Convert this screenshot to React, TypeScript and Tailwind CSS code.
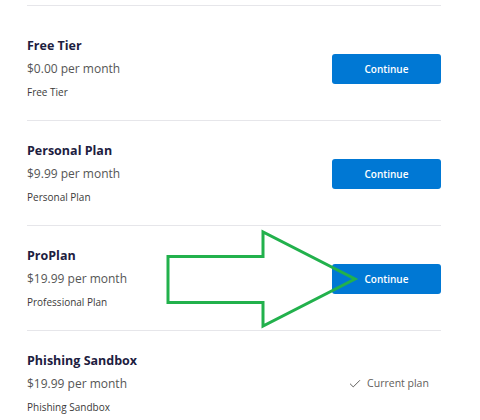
import { Check } from "lucide-react";

type Plan = {
  name: string;
  price: string;
  desc: string;
  current?: boolean;
};

const plans: Plan[] = [
  { name: "Free Tier", price: "$0.00 per month", desc: "Free Tier" },
  { name: "Personal Plan", price: "$9.99 per month", desc: "Personal Plan" },
  { name: "ProPlan", price: "$19.99 per month", desc: "Professional Plan" },
  { name: "Phishing Sandbox", price: "$19.99 per month", desc: "Phishing Sandbox", current: true },
];

function PlanRow({ plan, first }: { plan: Plan; first: boolean }) {
  return (
    <div
      className={`flex items-center justify-between border-t border-[#e6e6ea] pb-[17px] ${
        first ? "pt-[29px]" : "pt-[19px]"
      }`}
    >
      <div className="flex flex-col">
        <div className="text-[12.5px] font-bold leading-[22px] text-[#1d2040]">{plan.name}</div>
        <div className="text-[12px] leading-[24px] text-[#555555]">{plan.price}</div>
        <div className="text-[10px] leading-[22px] text-[#3b3a39]">{plan.desc}</div>
      </div>
      {plan.current ? (
        <div className="flex w-[109px] items-center justify-center gap-[5px] pl-[4px] text-[10.5px] text-[#5f5e5c]">
          <Check className="h-[14px] w-[14px]" strokeWidth={1.7} />
          Current plan
        </div>
      ) : (
        <button
          type="button"
          className="h-[30px] w-[109px] rounded-[3px] bg-[#0078d4] text-[10px] font-semibold text-white"
        >
          Continue
        </button>
      )}
    </div>
  );
}

export default function App() {
  return (
    <main
      className="relative h-[420px] w-[480px] overflow-hidden bg-white"
      style={{ fontFamily: '"Open Sans", "Noto Sans", sans-serif' }}
    >
      <div className="w-[441px] pl-[27px] pt-[5px]">
        {plans.map((p, i) => (
          <PlanRow key={p.name} plan={p} first={i === 0} />
        ))}
      </div>

      {/* annotation arrow */}
      <svg
        className="pointer-events-none absolute left-0 top-0"
        width="480"
        height="420"
        viewBox="0 0 480 420"
      >
        <polygon
          points="168,256.5 263,256.5 263,232 355,279 263,326 263,302.5 168,302.5"
          fill="none"
          stroke="#22b14c"
          strokeWidth="3"
          strokeLinejoin="miter"
        />
      </svg>
    </main>
  );
}
